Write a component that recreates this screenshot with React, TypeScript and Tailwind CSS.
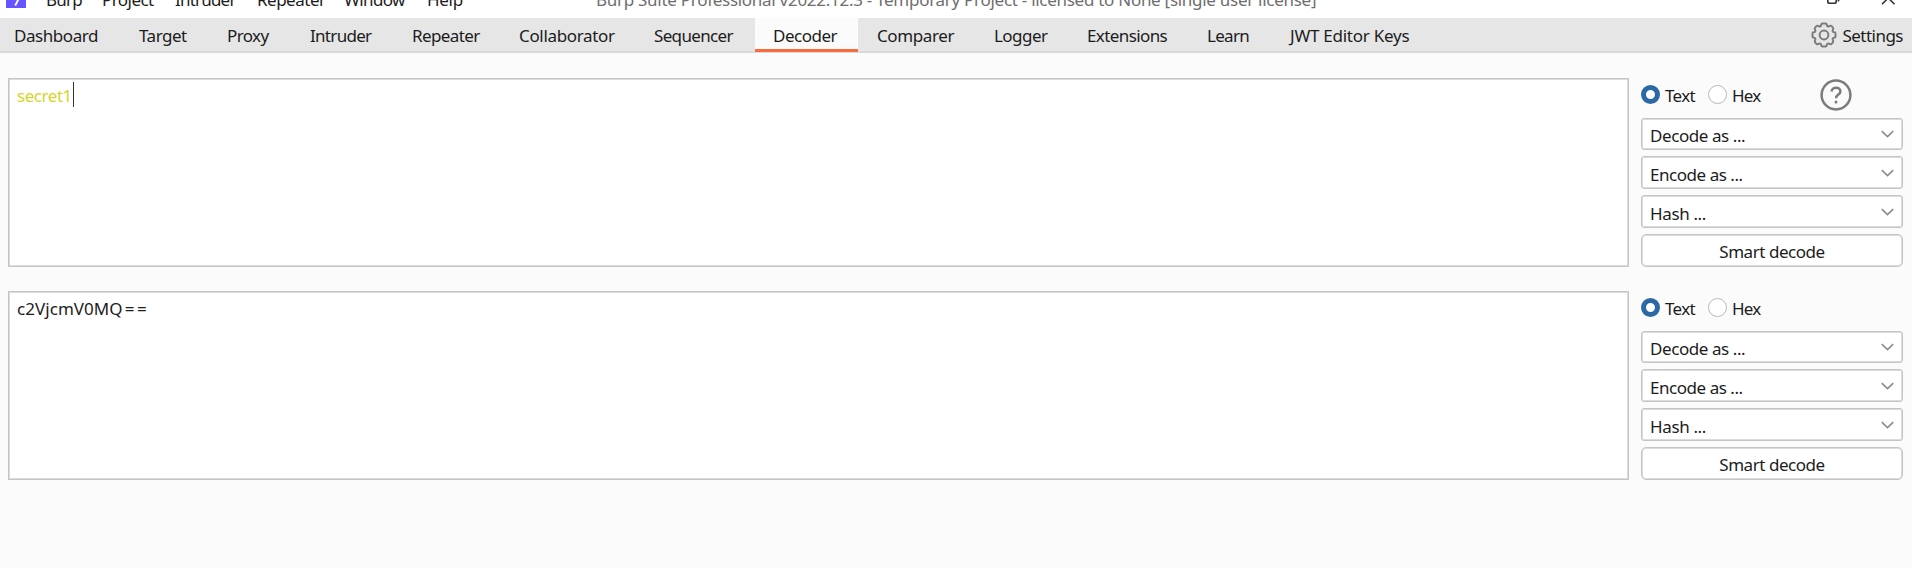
import React from "react";

const MENU = [
  { label: "Burp", cls: "w-[56px] tracking-[-0.8px]" },
  { label: "Project", cls: "w-[73px] tracking-[-0.56px]" },
  { label: "Intruder", cls: "w-[82px] tracking-[-0.8px]" },
  { label: "Repeater", cls: "w-[87px] tracking-[-0.5px]" },
  { label: "Window", cls: "w-[83px] tracking-[-0.6px]" },
  { label: "Help", cls: "w-[169px] tracking-[-0.3px]" },
];

const TABS = [
  { label: "Dashboard", cls: "w-[118px] pl-[14px] tracking-[-0.45px]" },
  { label: "Target", cls: "w-[90px] pl-[21px] tracking-[-0.5px]" },
  { label: "Proxy", cls: "w-[83px] pl-[19px] tracking-[-0.6px]" },
  { label: "Intruder", cls: "w-[102px] pl-[19px] tracking-[-0.7px]" },
  { label: "Repeater", cls: "w-[107px] pl-[19px] tracking-[-0.6px]" },
  { label: "Collaborator", cls: "w-[135px] pl-[19px] tracking-[-0.34px]" },
  { label: "Sequencer", cls: "w-[120px] pl-[19px] tracking-[-0.65px]" },
  { label: "Decoder", cls: "w-[103px] pl-[18px] tracking-[-0.5px]", active: true },
  { label: "Comparer", cls: "w-[116px] pl-[19px] tracking-[-0.38px]" },
  { label: "Logger", cls: "w-[94px] pl-[20px] tracking-[-0.54px]" },
  { label: "Extensions", cls: "w-[120px] pl-[19px] tracking-[-0.6px]" },
  { label: "Learn", cls: "w-[82px] pl-[19px] tracking-[-0.7px]" },
  { label: "JWT Editor Keys", cls: "w-[162px] pl-[20px] tracking-[-0.25px]" },
];

const SELECTS = [
  { label: "Decode as ...", cls: "tracking-[-0.42px]" },
  { label: "Encode as ...", cls: "tracking-[-0.46px]" },
  { label: "Hash ...", cls: "tracking-[-0.36px]" },
];

function TitleBar() {
  return (
    <header className="flex h-[18px] shrink-0 overflow-hidden bg-white">
      <div className="flex h-[8px] w-[46px] shrink-0 items-end pl-[6px]">
        <svg className="h-5 w-5" viewBox="0 0 20 20">
          <rect width="20" height="20" fill="#6354ff" />
          <path d="M10 11 H12.6 L9.2 17.5" fill="none" stroke="#fff" strokeWidth="1.8" />
        </svg>
      </div>
      <nav className="-mt-[12px] flex leading-[24px]">
        {MENU.map((m) => (
          <span key={m.label} className={`shrink-0 whitespace-nowrap ${m.cls}`}>{m.label}</span>
        ))}
      </nav>
      <h1 className="-mt-[12px] w-[1231px] shrink-0 whitespace-nowrap leading-[24px] tracking-[-0.28px] text-[#6e6e6e]">
        Burp Suite Professional v2022.12.3 - Temporary Project - licensed to None [single user license]
      </h1>
      <svg className="h-[18px] w-[86px] shrink-0" viewBox="0 0 86 18" fill="none" stroke="#333" strokeWidth="1.6">
        <path d="M.8 -6 V1.4 Q.8 3.3 2.7 3.3 H7.3 Q9.2 3.3 9.2 1.4 V-6 M10.8 1.2 Q12 .5 12 -1" />
        <path d="M55 4.2 L67.5 -8.3 M55 -8.3 L67.5 4.2" />
      </svg>
    </header>
  );
}

function Gear() {
  return (
    <svg className="h-[26px] w-[26px]" viewBox="-13 -13 26 26" fill="none" stroke="#7c7c7c" strokeWidth="2" strokeLinejoin="round">
      <circle r="4.4" />
      <path d="M-1.6 -11.5 H1.6 Q2.6 -11.5 2.7 -10.2 Q3.2 -7.8 5.6 -9 Q6.8 -9.7 7.6 -8.8 L8.8 -7.6 Q9.7 -6.8 9 -5.6 Q7.8 -3.2 10.2 -2.7 Q11.5 -2.6 11.5 -1.6 V1.6 Q11.5 2.6 10.2 2.7 Q7.8 3.2 9 5.6 Q9.7 6.8 8.8 7.6 L7.6 8.8 Q6.8 9.7 5.6 9 Q3.2 7.8 2.7 10.2 Q2.6 11.5 1.6 11.5 H-1.6 Q-2.6 11.5 -2.7 10.2 Q-3.2 7.8 -5.6 9 Q-6.8 9.7 -7.6 8.8 L-8.8 7.6 Q-9.7 6.8 -9 5.6 Q-7.8 3.2 -10.2 2.7 Q-11.5 2.6 -11.5 1.6 V-1.6 Q-11.5 -2.6 -10.2 -2.7 Q-7.8 -3.2 -9 -5.6 Q-9.7 -6.8 -8.8 -7.6 L-7.6 -8.8 Q-6.8 -9.7 -5.6 -9 Q-3.2 -7.8 -2.7 -10.2 Q-2.6 -11.5 -1.6 -11.5 Z" />
    </svg>
  );
}

function TabBar() {
  return (
    <nav className="flex h-[35px] shrink-0 border-b-2 border-[#d8dada] bg-[#e6e6e6] leading-[35px]">
      {TABS.map((t) => (
        <div key={t.label} className={`h-[34px] shrink-0 whitespace-nowrap ${t.cls} ${t.active ? "border-b-3 border-[#f96b3c] bg-[#fbfbfb]" : ""}`}>
          {t.label}
        </div>
      ))}
      <div className="ml-auto flex pr-[9px]">
        <div className="flex h-[33px] items-center"><Gear /></div>
        <span className="ml-[5px] tracking-[-0.51px]">Settings</span>
      </div>
    </nav>
  );
}

function Radio({ checked = false }: { checked?: boolean }) {
  return (
    <span className={`box-border h-[19px] w-[19px] shrink-0 rounded-full bg-white ${checked ? "border-[5px] border-[#2a69a4]" : "border border-[#b8b8b8]"}`} />
  );
}

function HelpIcon() {
  return (
    <svg className="ml-[57px] h-[32px] w-[32px]" viewBox="-16 -16 32 32" fill="none" stroke="#7c7c7c" strokeWidth="2.5">
      <circle r="14.4" />
      <path d="M-4.4 -3.4 C-4.4 -8.6 4.4 -8.6 4.4 -3.6 C4.4 -0.4 0 -0.6 0 3.2" />
      <circle cy="7" r="1.5" fill="#7c7c7c" stroke="none" />
    </svg>
  );
}

function Chevron() {
  return (
    <svg className="h-[8px] w-[13px]" viewBox="0 0 13 8" fill="none" stroke="#8c8c8c" strokeWidth="1.6">
      <path d="M.8 1.2 L6.5 6.6 L12.2 1.2" />
    </svg>
  );
}

function Pane({ children, help = false }: { children: React.ReactNode; help?: boolean }) {
  return (
    <section className="flex h-[189px] w-[1895px] shrink-0 gap-[12px]">
      <div className="flex w-[1621px] items-start border border-[#c6c5c6] bg-white pl-[8px] pt-[3px] leading-[26px] shadow-[inset_0_0_0_1px_#dcdbdc]">{children}</div>
      <div className="flex w-[262px] flex-col gap-[6px]">
        <div className="flex h-[34px] items-center whitespace-nowrap">
          <Radio checked />
          <span className="ml-[5px] w-[43px] pt-[2px] tracking-[-0.67px]">Text</span>
          <Radio />
          <span className="ml-[5px] w-[31px] pt-[2px] tracking-[-0.75px]">Hex</span>
          {help && <HelpIcon />}
        </div>
        {SELECTS.map((s) => (
          <div key={s.label} className="flex h-[33px] items-center justify-between rounded-[3px] border border-[#c6c5c6] bg-white pl-[8px] pr-[8px] shadow-[inset_0_0_0_1px_#dcdbdc]">
            <span className={`pt-[4px] ${s.cls}`}>{s.label}</span>
            <Chevron />
          </div>
        ))}
        <button className="h-[33px] rounded-[5px] border border-[#c6c5c6] bg-white pt-[3px] leading-[28px] tracking-[-0.45px] shadow-[inset_0_0_0_1px_#dcdbdc]">Smart decode</button>
      </div>
    </section>
  );
}

export default function App() {
  return (
    <div className="flex h-[568px] w-[1912px] flex-col overflow-hidden bg-[#fbfbfb] font-['Noto_Sans',sans-serif] text-[17px] text-[#1c1c1c]">
      <TitleBar />
      <TabBar />
      <main className="flex flex-col gap-[24px] pl-[8px] pt-[25px]">
        <Pane help>
          <span className="pt-px tracking-[-0.45px] text-[#d5d52b]">secret1</span>
          <span className="ml-px h-[25px] w-px bg-[#333]" />
        </Pane>
        <Pane>
          <span className="pt-px tracking-[0.05px]">c2VjcmV0MQ<span className="ml-[2px] tracking-[2.5px]">==</span></span>
        </Pane>
      </main>
    </div>
  );
}
